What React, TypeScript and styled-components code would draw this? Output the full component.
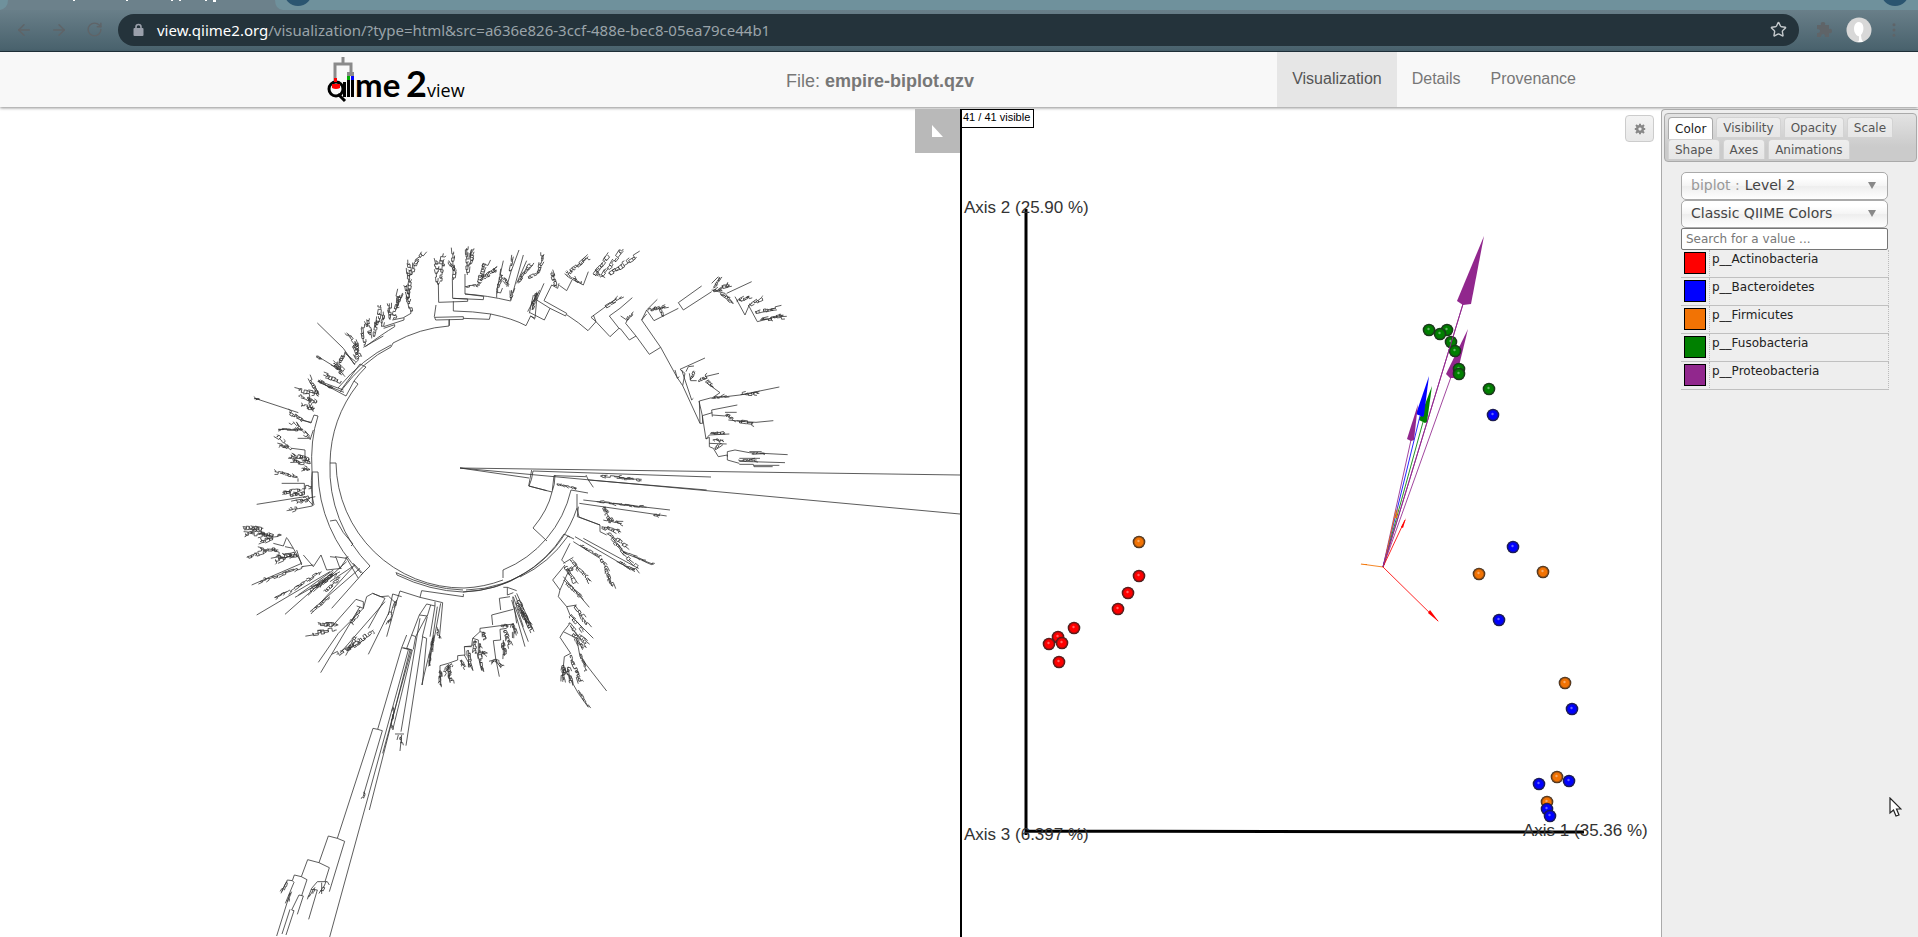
import React from 'react';
import styled, { createGlobalStyle } from 'styled-components';
import { ArrowLeft, ArrowRight, RotateCw, Star, MoreVertical } from 'lucide-react';

const GlobalStyle = createGlobalStyle`
  * { box-sizing: border-box; }
  body { margin: 0; background: #fff; font-family: "Liberation Sans", Arial, sans-serif; }
  button, input, select { font: inherit; }
`;

const Page = styled.div`
  min-height: 100vh;
  display: flex;
  flex-direction: column;
  overflow: hidden;
`;

/* ---------- browser chrome ---------- */

const Chrome = styled.div`
  flex: none;
  border-bottom: 1px solid #20323c;
`;
const TabStrip = styled.div`
  display: flex;
  height: 10px;
  background: #6f919c;
  overflow: hidden;
`;
const TabStripArt = styled.svg`
  flex: 1;
  height: 10px;
`;
const WindowDot = styled.svg`
  flex: none;
  width: 48px;
  height: 10px;
`;
const AddressRow = styled.div`
  display: flex;
  align-items: center;
  height: 41px;
  padding: 0 12px 2px;
  background: linear-gradient(#697f89, #48616c);
  color: #5f6468;
`;
const ChromeButton = styled.button<{ $w: number }>`
  display: flex;
  align-items: center;
  justify-content: center;
  width: ${(p) => p.$w}px;
  height: 28px;
  padding: 0;
  border: 0;
  background: none;
  color: inherit;
`;
const Address = styled.div`
  flex: 1;
  display: flex;
  align-items: center;
  height: 32px;
  margin: 0 12px;
  padding: 0 10px 0 15px;
  border-radius: 16px;
  background: #24333b;
  color: #9aa3a9;
  font: 15px/32px "Noto Sans", sans-serif;
  white-space: nowrap;
  overflow: hidden;
`;
const Url = styled.span`
  flex: 1;
  margin-left: 13px;
`;
const Host = styled.span`
  color: #fff;
`;

/* ---------- site header ---------- */

const Header = styled.header`
  position: relative;
  flex: none;
  height: 55px;
  background: #f8f8f8;
  box-shadow: 0 1px 3px rgba(0, 0, 0, 0.45);
`;
const HeaderInner = styled.div`
  display: grid;
  grid-template-columns: 459px 1fr auto;
  align-items: center;
  max-width: 1264px;
  height: 55px;
  margin: 0 auto;
`;
const Logo = styled.svg`
  display: block;
  width: 144px;
  height: 52px;
`;
const FileName = styled.div`
  font-size: 18px;
  line-height: 20px;
  padding-top: 3px;
  color: #777;
`;
const Nav = styled.nav`
  display: flex;
`;
const NavLink = styled.a<{ $active?: boolean }>`
  padding: 0 15px;
  font-size: 16px;
  line-height: 53px;
  height: 55px;
  text-decoration: none;
  color: ${(p) => (p.$active ? '#555' : '#777')};
  background: ${(p) => (p.$active ? '#e6e6e6' : 'transparent')};
`;

/* ---------- workspace ---------- */

const Workspace = styled.main`
  flex: 1;
  display: grid;
  grid-template-columns: minmax(0, 960fr) minmax(0, 701fr) minmax(257px, 257fr);
  padding-top: 2px;
`;
const Pane = styled.section<{ $divided?: boolean }>`
  position: relative;
  overflow: hidden;
  border-left: ${(p) => (p.$divided ? '2px solid #000' : '0')};
`;
const Canvas = styled.svg`
  display: block;
  width: 100%;
  height: 100%;
  min-height: 828px;
`;
const CornerButton = styled.button`
  position: absolute;
  top: 0;
  right: 0;
  display: flex;
  align-items: center;
  justify-content: center;
  width: 45px;
  height: 44px;
  padding: 0;
  border: 0;
  background: #b9b9b9;
`;
const VisibleCount = styled.div`
  position: absolute;
  top: 0;
  left: -1px;
  height: 19px;
  padding: 0 3px 0 1px;
  border: 1px solid #000;
  background: #fff;
  font-size: 11px;
  line-height: 15px;
  white-space: nowrap;
`;
const GearButton = styled.button`
  position: absolute;
  top: 6px;
  right: 7px;
  display: flex;
  align-items: center;
  justify-content: center;
  width: 29px;
  height: 27px;
  padding: 0;
  border: 1px solid #ccc;
  border-radius: 4px;
  background: linear-gradient(#f3f3f3, #e8e8e8);
`;

/* ---------- side panel ---------- */

const SidePanel = styled.aside`
  position: relative;
  padding: 3px 1px 0 2px;
  border: 1px solid #aaa;
  border-width: 1px 0 0 1px;
  border-radius: 4px 0 0 0;
  background: #eee;
  font-family: "DejaVu Sans", Verdana, sans-serif;
  font-size: 12px;
`;
const TabList = styled.div`
  display: flex;
  flex-wrap: wrap;
  align-content: flex-start;
  align-items: flex-start;
  column-gap: 3px;
  height: 49px;
  padding: 3px 20px 0 3px;
  border: 1px solid #aaa;
  border-radius: 4px;
  background: linear-gradient(#e3e3e3, #cbcbcb 70%);
`;
const Tab = styled.button<{ $active?: boolean }>`
  height: ${(p) => (p.$active ? 22 : 20)}px;
  padding: 0 6px;
  border: 1px solid ${(p) => (p.$active ? '#aaa' : '#d3d3d3')};
  border-bottom: 0;
  border-radius: 4px 4px 0 0;
  background: ${(p) => (p.$active ? '#fff' : 'linear-gradient(#eee, #e6e6e6)')};
  color: ${(p) => (p.$active ? '#212121' : '#555')};
  line-height: 20px;
`;
const Controls = styled.div`
  width: 208px;
  margin: 10px 0 0 17px;
`;
const Picker = styled.label`
  display: flex;
  align-items: center;
  width: 207px;
  height: 28px;
  padding: 0 10px 2px 9px;
  border: 1px solid #aaa;
  border-radius: 5px;
  background: linear-gradient(#fff 20%, #f4f4f4 50%, #eee 52%, #fff);
  color: #999;
  font-size: 14px;
`;
const PickerSelect = styled.select<{ $after?: boolean }>`
  flex: 1;
  min-width: 0;
  padding: 0;
  margin-left: ${(p) => (p.$after ? 5 : 0)}px;
  border: 0;
  appearance: none;
  background: none;
  color: #444;
`;
const Search = styled.input`
  display: block;
  width: 207px;
  height: 22px;
  padding: 0 4px;
  border: 1px solid #767676;
  border-radius: 2px;
  background: #fff;
  &::placeholder { color: #777; opacity: 1; }
`;
const Legend = styled.table`
  width: 208px;
  border-collapse: separate;
  border-spacing: 0;
  color: #222;
`;
const LegendCell = styled.td<{ $swatch?: boolean }>`
  width: ${(p) => (p.$swatch ? 28 : 180)}px;
  height: 28px;
  padding: ${(p) => (p.$swatch ? '2px 3px' : '1px 2px')};
  vertical-align: top;
  line-height: 16px;
  border-right: 1px dotted #bbb;
  border-bottom: 1px solid #c0c0c0;
`;
const Swatch = styled.button<{ $color: string }>`
  display: block;
  width: 22px;
  height: 22px;
  padding: 0;
  border: 1px solid #000;
  background: ${(p) => p.$color};
`;
const Pointer = styled.svg`
  position: absolute;
  right: 16px;
  top: 687px;
`;

/* ---------- phylogenetic tree ---------- */

type Twig = [number, number, number, number, number, number];

/* A zig-zag branch from one point to another with short forked tips along it. */
function twigPath([x1, y1, x2, y2, n, s]: Twig): string {
  const len = Math.hypot(x2 - x1, y2 - y1);
  const ux = (x2 - x1) / len;
  const uy = (y2 - y1) / len;
  const step = len / n;
  const noise = (i: number, k: number) => {
    const v = Math.sin(i * 12.9898 + k * 78.233 + x1 * 0.7 + y1 * 1.3) * 43758.5453;
    return v - Math.floor(v);
  };
  let off = 0;
  let d = `M${x1} ${y1}`;
  let forks = '';
  for (let i = 0; i < n; i += 1) {
    const at = (a: number, o: number) =>
      `${(x1 + ux * a - uy * o).toFixed(1)} ${(y1 + uy * a + ux * o).toFixed(1)}`;
    const a = (i + 0.2 + noise(i, 1) * 0.6) * step;
    const side = noise(i, 2) > 0.5 ? 1 : -1;
    const next = i === n - 1 ? 0 : side * s * noise(i, 3) * 0.5;
    d += `L${at(a, off)}L${at(a, next)}`;
    if (noise(i, 4) > 0.15) {
      const tip = next - side * s * (0.25 + noise(i, 5) * 0.5);
      const reach = step * 0.4 + s * noise(i, 6) * 1.3;
      forks += `M${at(a, next)}L${at(a, tip)}L${at(a + reach, tip - side * noise(i, 7) * 3)}`;
    }
    off = next;
  }
  return `${d}L${x2} ${y2}${forks}`;
}

const RINGS = `
M960 475L460 468L960 514M460 468L529 478M711 477L533 471Q532 480 529 486L552 492
M552 492Q555 485 555 475M552 492Q548 510 533 528L547 541M571 490A114 114 0 0 1 503 570V578M571 490L588 493
M577 494V508L579 517L600 525M577 508A119 119 0 0 1 466 590
M570 537L564 534A124 124 0 0 1 463 592M574 539L568 536A122 122 0 0 1 520 577
M330 463H336A127 127 0 0 0 464 588A124 124 0 0 0 503 580
M396 572L397 575Q430 591 463 592Q500 590 523 574M397 573Q430 589 463 590
M330 463A138 138 0 0 0 370 566L361 575M312 472H318A146 146 0 0 0 361 573
M330 521L336 520Q342 533 353 544L351 546
M330 463A132 132 0 0 1 358 384L354 381M354 381L346 396L318 381M354 381Q359 374 366 367L360 364L341 390
M449 320V326Q420 328 393 343L391 347Q364 360 340 392M391 345Q363 358 338 388
M318 416Q310 440 312 472M318 416L314 415L311 423L303 420M312 472Q310 490 314 505
`;

const GROUPS: { x: number; y: number; lines: string; twigs: Twig[] }[] = [
  {
    x: 230,
    y: 230,
    lines: `M406 350Q460 310 494 290V284L461 295M461 290L522 270V263L487 270M522 262L543 250
M262 279L340 355L373 402L385 390M345 365L375 405M268 382L330 420M400 352L460 318M377 395L345 370
M264 452L340 480M268 458L342 487M75 505L205 548M145 598L215 600M155 760L223 760V790M80 823L225 800L250 827
M244 577L220 572M185 655L225 660V690L240 695M204 745V755M247 727V828L205 836M256 800L232 805M250 600L240 630M240 625L203 625`,
    twigs: [
      [543, 250, 530, 165, 8, 13], [530, 215, 552, 100, 11, 12], [552, 100, 574, 70, 6, 14], [536, 150, 538, 100, 6, 12],
      [490, 268, 510, 195, 8, 15], [500, 235, 508, 198, 6, 12], [480, 270, 478, 220, 5, 10], [440, 300, 452, 225, 7, 14],
      [455, 290, 460, 245, 6, 11], [425, 325, 412, 270, 8, 15], [430, 320, 440, 270, 6, 11], [403, 348, 395, 290, 7, 12],
      [385, 352, 350, 308, 5, 8], [385, 390, 370, 345, 7, 13], [395, 380, 375, 340, 6, 11], [340, 425, 310, 400, 7, 12],
      [330, 415, 335, 375, 6, 12], [335, 455, 280, 435, 7, 13], [345, 440, 315, 405, 7, 12], [310, 475, 266, 450, 7, 9],
      [275, 388, 258, 378, 4, 6], [265, 500, 240, 450, 7, 13], [265, 490, 205, 480, 8, 13], [262, 515, 205, 498, 8, 11],
      [255, 535, 213, 528, 6, 12], [250, 545, 235, 500, 6, 11], [222, 572, 178, 548, 7, 11], [90, 508, 72, 506, 3, 5],
      [240, 625, 190, 575, 8, 14], [220, 600, 145, 598, 7, 7], [185, 658, 140, 620, 7, 16], [175, 650, 148, 645, 5, 11],
      [240, 688, 182, 675, 9, 14], [242, 700, 190, 695, 9, 14], [240, 718, 215, 715, 6, 10], [203, 742, 134, 725, 8, 9],
      [215, 780, 157, 787, 7, 13], [225, 790, 178, 795, 7, 13], [240, 805, 200, 820, 7, 13], [205, 836, 170, 842, 5, 9],
      [245, 770, 225, 770, 3, 9],
    ],
  },
  {
    x: 400,
    y: 230,
    lines: `M148 268V287M108 225L103 260L107 270L190 268V260L105 262M190 265L268 268L272 252Q220 244 160 243V214
M115 160L116 217L203 214V207L158 205L157 145M160 205L250 209L251 199L195 192V132M195 192Q260 196 332 213L345 165L370 75
M290 203V182L310 92M320 170L333 125L357 60M350 160L380 92M272 252Q340 266 378 287L392 258L405 265L412 190L383 245
M392 258L405 268M410 210L432 160M410 210L450 235L433 270L390 248M450 235L497 258L500 250L432 212L455 165L473 175L477 160
M400 195L388 250M408 192L396 240M478 166L500 182L517 148L550 165L565 125M500 254Q540 280 564 302L588 275L573 262L610 235L650 205M580 255L588 275L630 320L657 295L628 258L660 235L697 203
M657 295L662 297L688 330L708 318L677 280L690 255M662 258L680 270M708 318L748 373L782 352L725 270L740 240L762 272L835 235M835 218L905 168M835 218L850 240L935 185
M782 352L830 440M740 240L772 208M725 270L740 252M935 160L955 140M935 180L975 190L1000 220M980 190L1055 155
M1005 200L1035 255L1050 220M1045 225L1072 275L1150 255M830 440L848 467L855 430L840 418L915 384M825 420L832 445L838 440M848 467L900 580H908L907 557L937 548
M845 420L875 510L880 505M858 425L865 410L882 408M868 430L872 452H890M900 580L898 513L935 503M907 557L897 513M937 560L935 540L1012 525M937 555L975 558M975 547H1010
M907 557Q912 590 918 627L928 615L988 612M918 627L928 622V650L940 655L955 680L982 675V690L1018 700M928 640L980 642M982 680V665L1005 660L1048 668L1163 674M1048 665H1085
M1018 685H1080M1018 703H1060L1062 710H1118M1018 694L1155 698M1062 706H1138M935 505L1020 495L1138 471M915 440L957 430M915 455L960 488L935 505M985 570L1035 575L1068 577L1120 572
M395 720L386 768L440 782M457 780L462 737L558 740M558 735L565 750L920 780M565 750L580 772`,
    twigs: [
      [115, 165, 108, 90, 10, 14], [120, 155, 130, 70, 10, 15], [160, 150, 161, 65, 7, 12], [165, 125, 145, 95, 5, 10],
      [202, 135, 200, 55, 8, 13], [210, 105, 222, 55, 6, 14], [195, 170, 240, 165, 5, 6], [235, 160, 255, 100, 9, 16],
      [240, 150, 290, 120, 10, 16], [292, 190, 308, 135, 9, 14], [325, 170, 312, 145, 5, 10], [330, 125, 340, 80, 4, 7],
      [355, 160, 390, 100, 8, 13], [385, 145, 415, 130, 6, 11], [415, 130, 430, 75, 8, 10], [332, 210, 335, 180, 3, 8],
      [398, 240, 408, 190, 9, 10], [470, 170, 455, 125, 7, 14], [545, 160, 520, 145, 4, 8], [517, 148, 497, 125, 4, 10],
      [505, 130, 565, 80, 10, 13], [580, 135, 625, 75, 8, 17], [585, 120, 605, 140, 4, 9], [605, 140, 670, 57, 9, 14],
      [625, 130, 710, 82, 10, 16], [615, 230, 665, 200, 5, 12], [680, 272, 700, 245, 3, 9], [745, 240, 795, 230, 9, 12],
      [790, 260, 785, 240, 2, 8], [940, 185, 990, 165, 8, 14], [960, 190, 1000, 220, 7, 11], [1010, 215, 1048, 200, 7, 12],
      [1050, 225, 1088, 205, 7, 11], [1065, 245, 1128, 235, 9, 14], [1080, 270, 1150, 257, 8, 14], [940, 175, 960, 142, 5, 8],
      [870, 450, 885, 425, 4, 10], [895, 455, 920, 440, 5, 9], [920, 450, 940, 470, 6, 10], [940, 505, 980, 497, 4, 8],
      [1022, 494, 1078, 490, 6, 11], [975, 555, 1000, 565, 5, 11], [1010, 572, 1060, 578, 4, 12], [930, 610, 975, 608, 5, 8],
      [938, 630, 970, 630, 5, 7], [945, 660, 965, 640, 5, 10], [1015, 690, 1070, 690, 6, 6], [1055, 672, 1095, 670, 4, 6],
      [600, 738, 700, 745, 8, 7], [650, 745, 725, 748, 6, 7], [470, 762, 530, 775, 9, 5],
    ],
  },
  {
    x: 230,
    y: 500,
    lines: `M370 190L398 220L385 235L350 175L315 170M385 235L305 325M350 175L330 205L318 172L300 170M310 215L165 343M335 205L290 210L273 165L250 200L220 165
M390 205L240 335M330 215L195 292M300 215L80 345M170 275L133 293M215 190L65 255M215 195L200 150M250 195L215 200M375 195L300 245
M165 140L190 145L172 115M130 130L160 138L170 112M350 185L250 275M310 210L205 285M370 200L270 310M345 175L355 170M190 145L215 190
M400 325L400 305L378 298L310 375M400 325L380 318M400 325L410 290L428 280L465 295L415 385M400 325L325 400L265 487M390 320L272 518
M465 305L330 460M428 280L452 290L475 288L498 310L510 273L570 292L575 272L700 290V282M498 310L470 410M485 338L478 335L415 463
M515 290L488 282L475 345M570 292L638 308L628 415M615 305V318L590 312L568 345L592 348L602 315M615 318L600 410M568 345L545 405L557 410L590 348
M545 405L530 445M557 410L550 448M520 443L543 450M592 350L577 410L590 415L577 555M622 320L600 470M632 310L610 430M612 405L598 495
M820 262L832 262L860 272M832 262V285L850 278M840 290L808 295L812 330M850 328L785 345L788 375M850 372L750 385V395M848 290L860 370M850 290L880 380M855 285L895 385M860 280L912 395
M855 320L895 425M845 300L885 440M830 385L810 388L812 420L790 422L797 475M750 395L728 415L725 438L703 440L705 465L683 467V480L655 490L630 497V515M797 475L808 530
M630 515L633 558M655 495L660 545M750 395L768 400M728 415L745 420V470L755 512M703 465L728 510M820 420L820 465M703 440L725 440
M1045 20L1042 50L1110 75V95L1130 105M1048 10L1310 48M1060 0L1320 30M1020 130L995 180L1005 190M1035 110L1215 215M1030 125L1110 175M1060 115L1225 205M1140 105L1185 160L1270 193
M1000 190L1030 172M1005 195L968 240L990 270L1015 215M990 270L985 290L1010 320L1040 315M1010 320L1020 345L1090 415M1000 230L1078 322M1020 370L1000 395L990 412L1022 460L1003 470L1000 500M1000 395L1040 415L1050 470L1130 573
M1022 380L1060 430M1000 500L1045 580L1075 622`,
    twigs: [
      [100, 85, 38, 80, 8, 14], [115, 100, 45, 102, 9, 14], [130, 110, 65, 90, 8, 14], [130, 115, 90, 125, 6, 11],
      [155, 105, 115, 110, 5, 10], [145, 150, 90, 145, 7, 12], [110, 155, 50, 172, 7, 13], [195, 160, 135, 180, 9, 16],
      [205, 170, 140, 165, 7, 13], [220, 200, 90, 245, 11, 10], [275, 215, 180, 275, 10, 11], [320, 220, 260, 260, 10, 12],
      [330, 230, 285, 275, 9, 10], [300, 290, 245, 335, 7, 8], [180, 270, 135, 293, 4, 8], [310, 220, 240, 275, 10, 12],
      [325, 375, 270, 375, 7, 16], [320, 390, 247, 400, 7, 16], [390, 330, 360, 370, 8, 12], [430, 390, 385, 425, 7, 14],
      [395, 425, 320, 463, 10, 13], [380, 410, 350, 450, 7, 12], [500, 300, 475, 370, 7, 8], [620, 380, 628, 415, 5, 7],
      [600, 460, 600, 498, 4, 7], [610, 410, 605, 450, 4, 7], [865, 300, 905, 390, 16, 12],
      [860, 310, 895, 370, 14, 12], [850, 370, 855, 400, 9, 12], [835, 380, 820, 375, 4, 8], [825, 390, 838, 435, 8, 12],
      [820, 425, 825, 465, 7, 12], [800, 480, 785, 485, 4, 9], [800, 480, 815, 500, 5, 10], [760, 395, 765, 420, 5, 9],
      [735, 420, 735, 460, 7, 12], [748, 430, 755, 510, 10, 9], [715, 450, 720, 500, 8, 12], [755, 455, 765, 462, 5, 9],
      [690, 480, 705, 500, 6, 11], [665, 490, 640, 515, 5, 13], [655, 498, 663, 543, 7, 12], [630, 510, 630, 555, 6, 11],
      [1120, 20, 1140, 60, 9, 12], [1120, 60, 1175, 70, 8, 11], [1115, 80, 1170, 95, 8, 12], [1130, 100, 1190, 138, 9, 12],
      [1150, 125, 1225, 205, 11, 12], [1160, 185, 1215, 210, 10, 7], [1180, 155, 1270, 193, 7, 6], [1050, 135, 1110, 170, 7, 6],
      [1115, 175, 1145, 258, 14, 12], [1020, 180, 1080, 243, 10, 11], [1005, 200, 1035, 250, 10, 14], [1000, 240, 1060, 300, 10, 11],
      [1010, 215, 1030, 205, 5, 10], [1035, 315, 1070, 375, 8, 14], [1020, 345, 1060, 395, 7, 13], [1015, 370, 1070, 430, 10, 13],
      [1030, 400, 1060, 445, 9, 12], [1050, 460, 1070, 512, 7, 9], [1022, 465, 1048, 545, 13, 14], [1000, 495, 1000, 540, 9, 13],
      [1015, 500, 1020, 550, 8, 12], [1045, 570, 1075, 620, 5, 6], [1270, 45, 1290, 47, 3, 6], [1100, 5, 1250, 22, 10, 6],
    ],
  },
  {
    x: 250,
    y: 640,
    lines: `M470 25L487 30L428 270M470 -15L455 23L383 268M480 30L358 510M475 30L239 891M484 30L398 340M455 23L475 28M383 268L397 272L342 460M383 268L369 265L262 595L284 604L238 755
M262 595L235 588L207 668L238 683L225 725M207 668L173 659L154 710L171 719L155 767M154 710L133 705L127 722L112 720L93 760M127 722L132 727L106 790
M147 765L160 768L142 823M147 765L125 810L132 812L108 885M120 808L96 882M120 760L80 888M183 748L202 750L176 838M202 725H232L238 735M202 725L185 745L172 778M215 728V762
M510 -65L453 275M518 -10L468 317M548 0L515 135M435 282H462M455 285L450 333M445 285L441 300M542 40L538 78`,
    twigs: [
      [342, 455, 341, 475, 3, 7], [195, 742, 178, 770, 3, 8], [228, 725, 214, 755, 3, 9], [112, 725, 95, 755, 3, 8],
      [452, 290, 452, 310, 3, 8], [430, 200, 425, 265, 4, 6], [125, 755, 112, 785, 2, 6],
    ],
  },
];

function Tree() {
  return (
    <Canvas role="img" aria-label="Phylogenetic tree">
      <g fill="none" stroke="#333" strokeOpacity={0.8} strokeWidth={1} transform="translate(0 -109)">
        <path d={RINGS} />
        {GROUPS.map((g) => (
          <g key={`${g.x}-${g.y}`} transform={`translate(${g.x} ${g.y}) scale(0.33333)`} strokeWidth={3}>
            <path d={g.lines} />
            <path d={g.twigs.map(twigPath).join('')} />
          </g>
        ))}
      </g>
    </Canvas>
  );
}

/* ---------- ordination plot ---------- */

const COLORS = { red: '#ff0000', blue: '#0000ff', orange: '#f27304', green: '#008000', purple: '#91278d' };
type Hue = keyof typeof COLORS;

const POINTS: [number, number, Hue][] = [
  [1429, 330, 'green'], [1447, 330, 'green'], [1440, 334, 'green'], [1451, 342, 'green'], [1455, 351, 'green'],
  [1459, 369, 'green'], [1459, 374, 'green'], [1489, 389, 'green'], [1493, 415, 'blue'], [1513, 547, 'blue'],
  [1479, 574, 'orange'], [1543, 572, 'orange'], [1499, 620, 'blue'], [1565, 683, 'orange'], [1572, 709, 'blue'],
  [1557, 777, 'orange'], [1569, 781, 'blue'], [1539, 784, 'blue'], [1547, 802, 'orange'], [1547, 809, 'blue'],
  [1550, 816, 'blue'], [1139, 542, 'orange'], [1139, 576, 'red'], [1128, 593, 'red'], [1118, 609, 'red'],
  [1074, 628, 'red'], [1058, 637, 'red'], [1049, 644, 'red'], [1062, 643, 'red'], [1059, 662, 'red'],
];

const ARROWS: { hue: Hue; line: string; head: string }[] = [
  { hue: 'purple', line: 'M1383 567L1463 304', head: '1484,236 1457,301 1463,305 1471,304' },
  { hue: 'purple', line: 'M1383 567L1451 377', head: '1468,329 1446,374 1450,378 1456,378' },
  { hue: 'green', line: 'M1383 567L1423 422', head: '1432,386 1419,420 1425,423 1427,422' },
  { hue: 'blue', line: 'M1383 567L1420 416', head: '1429,376 1416,414 1423,417 1424,415' },
  { hue: 'purple', line: 'M1383 567L1411 440', head: '1418,404 1407,439 1411,441 1414,440' },
  { hue: 'orange', line: 'M1384 565L1396 510', head: '1398,506 1395,518 1397,518' },
  { hue: 'red', line: 'M1383 567L1405 520', head: '1406,518 1401,527 1403,528' },
  { hue: 'orange', line: 'M1383 567L1361 564', head: '1360,564 1367,564 1367,565' },
  { hue: 'red', line: 'M1383 567L1438 621', head: '1439,622 1428,613 1430,610' },
];

function Biplot() {
  return (
    <Canvas role="img" aria-label="Ordination biplot">
      <defs>
        {(Object.keys(COLORS) as Hue[]).map((h) => (
          <radialGradient key={h} id={`ball-${h}`} cx="0.5" cy="0.5" r="0.5">
            <stop offset="0" stopColor={COLORS[h]} />
            <stop offset="0.6" stopColor={COLORS[h]} />
            <stop offset="1" stopColor="#222" />
          </radialGradient>
        ))}
      </defs>
      <g transform="translate(-962 -109)">
        <path d="M1026 209V835M1025 831L1584 832" stroke="#000" strokeWidth={3} fill="none" />
        {ARROWS.map((a) => (
          <g key={a.head} fill={COLORS[a.hue]}>
            <path d={a.line} stroke={COLORS[a.hue]} strokeWidth={1} strokeOpacity={0.85} />
            <polygon points={a.head} />
          </g>
        ))}
        {POINTS.map(([x, y, h]) => (
          <g key={`${x}-${y}`}>
            <circle cx={x} cy={y} r={6.3} fill={`url(#ball-${h})`} />
            <circle cx={x - 0.5} cy={y - 1} r={1.2} fill="#fff" fillOpacity={0.4} />
          </g>
        ))}
        <path d="M1383 567L1463 304" stroke={COLORS.purple} strokeWidth={1} />
        <g fill="#333" fontFamily="Liberation Sans, Arial, sans-serif" fontSize={17}>
          <text x={964} y={213}>Axis 2 (25.90 %)</text>
          <text x={964} y={840}>Axis 3 (6.397 %)</text>
          <text x={1523} y={836}>Axis 1 (35.36 %)</text>
        </g>
      </g>
    </Canvas>
  );
}

const LEGEND: [string, string][] = [
  ['p__Actinobacteria', COLORS.red],
  ['p__Bacteroidetes', COLORS.blue],
  ['p__Firmicutes', COLORS.orange],
  ['p__Fusobacteria', COLORS.green],
  ['p__Proteobacteria', COLORS.purple],
];
const TABS = ['Color', 'Visibility', 'Opacity', 'Scale', 'Shape', 'Axes', 'Animations'];

const Caret = () => (
  <svg width="9" height="8" aria-hidden="true"><path d="M0 1H8L4 8Z" fill="#888" /></svg>
);

export default function App() {
  return (
    <Page>
      <GlobalStyle />
      <Chrome>
        <TabStrip>
          <TabStripArt aria-hidden="true">
            <path d="M0 10Q8 8 8 0H275Q275 9 283 10Z" fill="#6c818b" />
            <circle cx="298" cy="-8" r="14" fill="#2b5570" />
            <path d="M74 0V1M127 0V1M172 0V1M180 0V1M206 0V1M213 1H216" stroke="#fff" strokeWidth="2" />
          </TabStripArt>
          <WindowDot aria-hidden="true"><circle cx="25" cy="-8" r="14" fill="#2b5570" /></WindowDot>
        </TabStrip>
        <AddressRow>
          <ChromeButton $w={24} aria-label="Back"><ArrowLeft size={18} /></ChromeButton>
          <ChromeButton $w={46} aria-label="Forward"><ArrowRight size={18} /></ChromeButton>
          <ChromeButton $w={24} aria-label="Reload"><RotateCw size={17} /></ChromeButton>
          <Address>
            <svg width="11" height="14" viewBox="0 0 11 14" aria-hidden="true">
              <path d="M3 6V4a2.500 2.500 0 0 1 5 0V6" fill="none" stroke="#9aa0ab" strokeWidth="1.600" />
              <rect x="0.500" y="5" width="10" height="8" rx="1" fill="#9aa0ab" />
            </svg>
            <Url><Host>view.qiime2.org</Host>/visualization/?type=html&amp;src=a636e826-3ccf-488e-bec8-05ea79ce44b1</Url>
            <ChromeButton $w={22} aria-label="Bookmark"><Star size={17} color="#c3c8cb" /></ChromeButton>
          </Address>
          <ChromeButton $w={24} aria-label="Extensions">
            <svg width="17" height="16" viewBox="0 0 17 16">
              <path d="M2 3H6Q5 0 8 0T10 3H14V7Q17 6 17 9T14 11V15H10Q10 12 8 12T6 15H2V11Q5 11 5 9T2 7Z" fill="#5f6468" />
            </svg>
          </ChromeButton>
          <ChromeButton $w={47} aria-label="Profile">
            <svg width="26" height="26" viewBox="0 0 26 26">
              <circle cx="13" cy="13" r="12.500" fill="#d8d8d8" />
              <path d="M13 5C8 5 7 12 9 16Q11 20 13 19V23Q13 25 9 25H17Q15 22 15 18C19 14 18 5 13 5Z" fill="#fff" />
            </svg>
          </ChromeButton>
          <ChromeButton $w={24} aria-label="Menu"><MoreVertical size={18} /></ChromeButton>
        </AddressRow>
      </Chrome>

      <Header>
        <HeaderInner>
          <a href="#home" aria-label="QIIME 2 View">
            <Logo viewBox="0 0 144 52">
              <path d="M8 28V10H24V20M16 10V3" stroke="#8a8a8a" strokeWidth="3" fill="none" />
              <path d="M20 18H27V22H20Z" fill="#8a8a8a" />
              <circle cx="9" cy="35" r="7" fill="none" stroke="#000" strokeWidth="3" />
              <path d="M7 24H10V28H7ZM5 30H13V34Q9 36 5 34Z" fill="#f00" />
              <path d="M11 40L18 47" stroke="#000" strokeWidth="3" />
              <path d="M17.500 28V43M21.500 26V43M25.500 26V43" stroke="#000" strokeWidth="3" />
              <rect x="20" y="22" width="3" height="4" fill="#0a0" />
              <rect x="24" y="22" width="3" height="4" fill="#00f" />
              <g fontFamily="Lato, sans-serif" fill="#000">
                <text x="28" y="43" fontSize="33" fontWeight="700">me</text>
                <text x="79" y="43" fontSize="36" fontWeight="700">2</text>
                <text x="100" y="43" fontSize="18" fontFamily="Open Sans, sans-serif">view</text>
              </g>
            </Logo>
          </a>
          <FileName>File: <b>empire-biplot.qzv</b></FileName>
          <Nav>
            <NavLink href="#visualization" $active>Visualization</NavLink>
            <NavLink href="#details">Details</NavLink>
            <NavLink href="#provenance">Provenance</NavLink>
          </Nav>
        </HeaderInner>
      </Header>

      <Workspace>
        <Pane>
          <Tree />
          <CornerButton aria-label="Toggle tree controls">
            <svg width="11" height="12"><path d="M0 0V12H11Z" fill="#fff" /></svg>
          </CornerButton>
        </Pane>
        <Pane $divided>
          <Biplot />
          <VisibleCount>41 / 41 visible</VisibleCount>
          <GearButton aria-label="Settings">
            <svg width="12" height="12" viewBox="-6 -6 12 12">
              <circle r="2.800" fill="none" stroke="#888" strokeWidth="2.400" />
              <path d="M0 -5.200V-3M0 5.200V3M-5.200 0H-3M5.200 0H3M-4 -4L-2 -2M4 4L2 2M-4 4L-2 2M4 -4L2 -2" stroke="#888" strokeWidth="2" />
            </svg>
          </GearButton>
        </Pane>
        <SidePanel>
          <TabList role="tablist">
            {TABS.map((t, i) => (
              <Tab key={t} role="tab" aria-selected={i === 0} $active={i === 0}>{t}</Tab>
            ))}
          </TabList>
          <Controls>
            <Picker>
              biplot :
              <PickerSelect $after defaultValue="Level 2"><option>Level 2</option></PickerSelect>
              <Caret />
            </Picker>
            <Picker>
              <PickerSelect aria-label="Color scheme" defaultValue="Classic QIIME Colors">
                <option>Classic QIIME Colors</option>
              </PickerSelect>
              <Caret />
            </Picker>
            <Search aria-label="Search for a value" placeholder="Search for a value ..." />
            <Legend>
              <tbody>
                {LEGEND.map(([name, color]) => (
                  <tr key={name}>
                    <LegendCell $swatch><Swatch $color={color} aria-label={`Color of ${name}`} /></LegendCell>
                    <LegendCell>{name}</LegendCell>
                  </tr>
                ))}
              </tbody>
            </Legend>
          </Controls>
          <Pointer width="13" height="20" viewBox="0 0 13 20" aria-hidden="true">
            <path d="M1 1V16L4.500 13L7 19L10 18L7.500 12H12Z" fill="#fff" stroke="#222" strokeWidth="1.200" />
          </Pointer>
        </SidePanel>
      </Workspace>
    </Page>
  );
}
